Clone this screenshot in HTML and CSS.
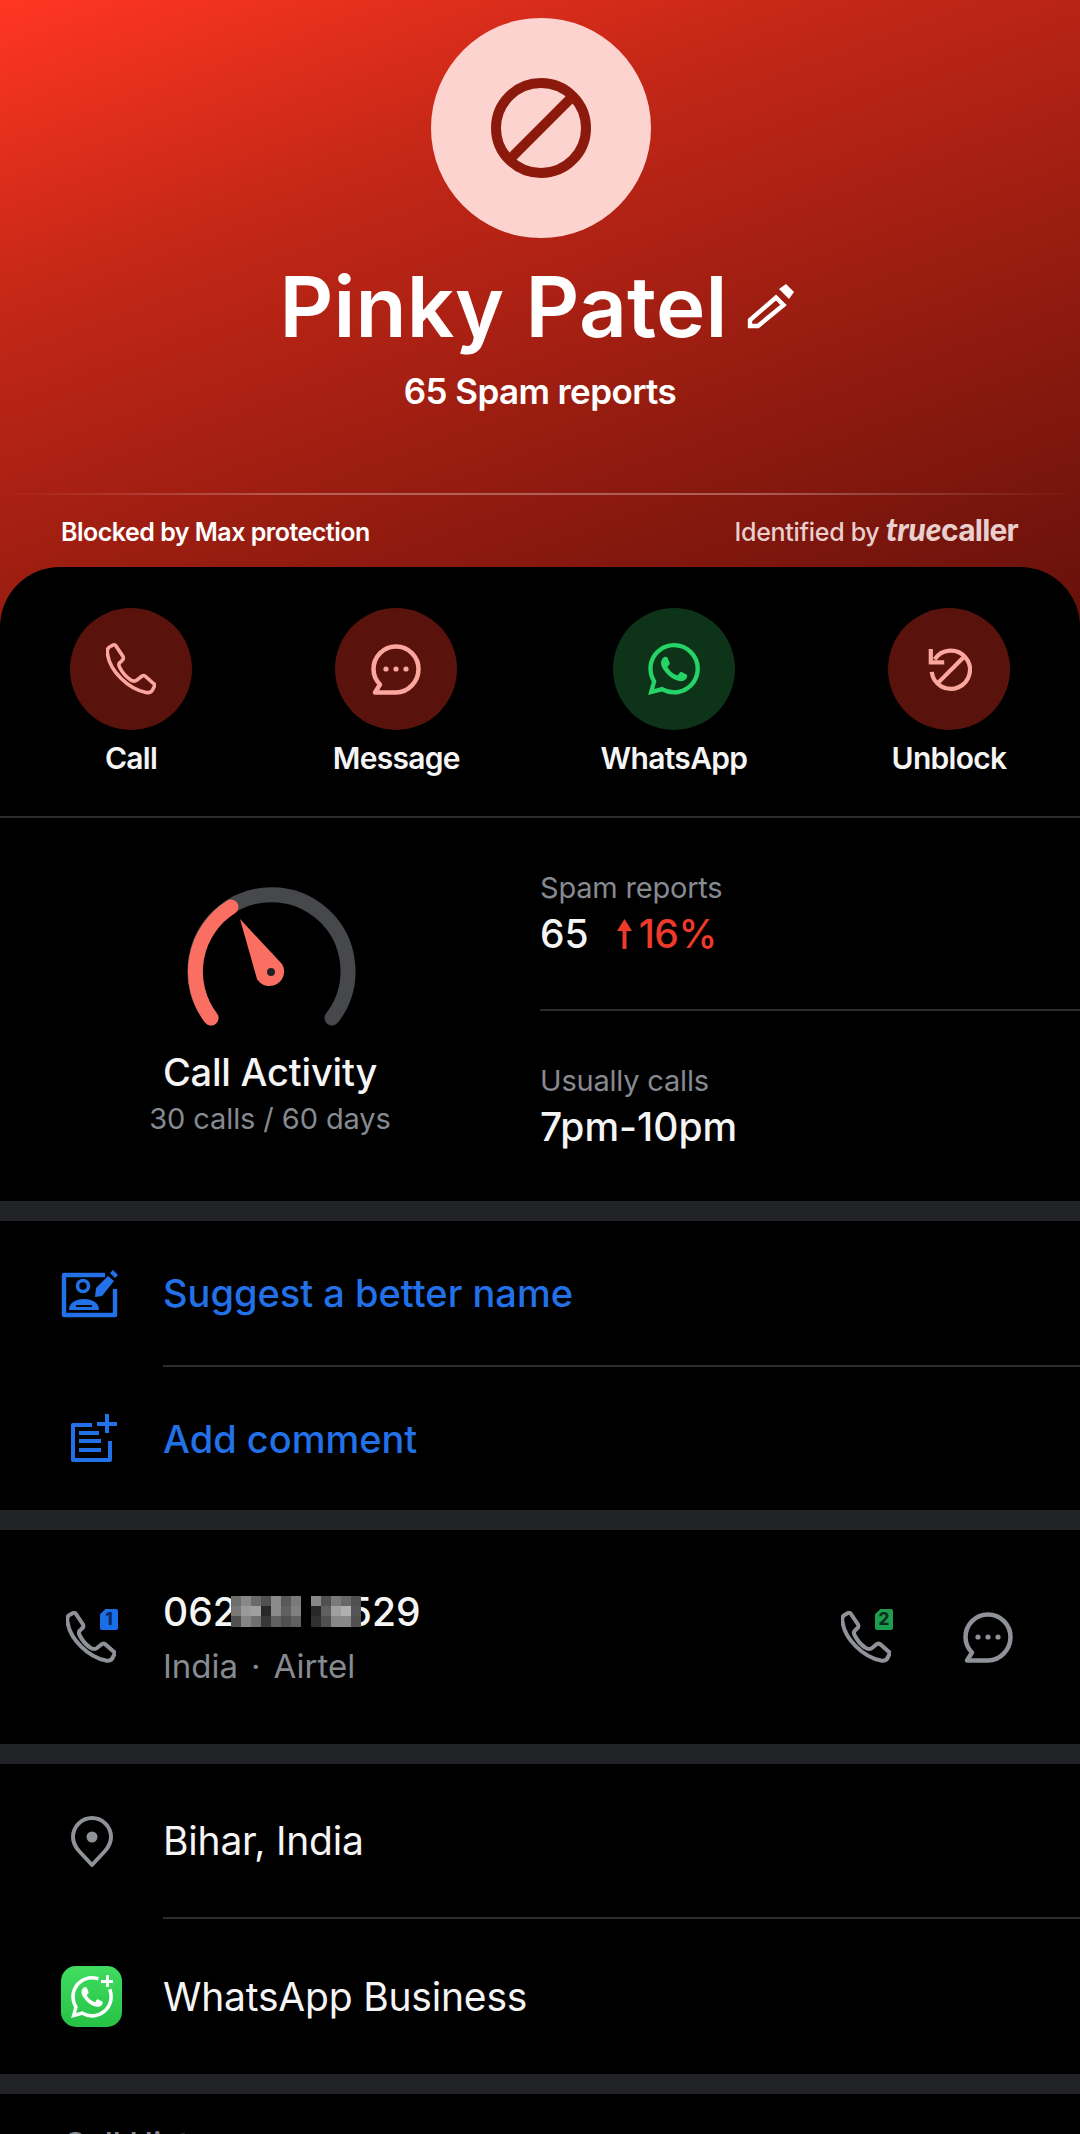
FILE: index.html
```html
<!DOCTYPE html>
<html lang="en">
<head>
    <meta charset="UTF-8">
    <meta name="viewport" content="width=device-width, initial-scale=1.0">
    <title>Pinky Patel</title>
    <link rel="stylesheet" href="styles.css">
</head>
<body>
    <svg class="defs" width="0" height="0">
        <defs>
            <path id="phone" d="M7 2 L3.5 4 C1.5 5 1 8 1.5 11 C4 28 22 46 40 49.5 C43 50 45.5 49 46.5 47 L48.5 43 C49 42 48.5 41 47.5 40.5 L39 33 C38 32.5 37 32.5 36 33 L31 37 C29 38.5 26 38 24 36.5 C19 33 16 29 13.5 24 C12.5 22 13 20 14.5 19 L17 16.5 C17.5 15.5 17.5 14.5 17 13.5 L10 3 C9.5 2 8 1.5 7 2 Z"/>
            <path id="whatsapp" d="M17.472 14.382c-.297-.149-1.758-.867-2.03-.967-.273-.099-.471-.148-.67.15-.197.297-.767.966-.94 1.164-.173.199-.347.223-.644.075-.297-.15-1.255-.463-2.39-1.475-.883-.788-1.48-1.761-1.653-2.059-.173-.297-.018-.458.13-.606.134-.133.298-.347.446-.52.149-.174.198-.298.298-.497.099-.198.05-.371-.025-.52-.075-.149-.669-1.612-.916-2.207-.242-.579-.487-.5-.669-.51-.173-.008-.371-.01-.57-.01-.198 0-.52.074-.792.372-.272.297-1.04 1.016-1.04 2.479 0 1.462 1.065 2.875 1.213 3.074.149.198 2.096 3.2 5.077 4.487.709.306 1.262.489 1.694.625.712.227 1.36.195 1.871.118.571-.085 1.758-.719 2.006-1.413.248-.694.248-1.289.173-1.413-.074-.124-.272-.198-.57-.347m-5.421 7.403h-.004a9.87 9.87 0 01-5.031-1.378l-.361-.214-3.741.982.998-3.648-.235-.374a9.86 9.86 0 01-1.51-5.26c.001-5.45 4.436-9.884 9.888-9.884 2.64 0 5.122 1.03 6.988 2.898a9.825 9.825 0 012.893 6.994c-.003 5.45-4.437 9.884-9.885 9.884m8.413-18.297A11.815 11.815 0 0012.05 0C5.495 0 .16 5.335.157 11.892c0 2.096.547 4.142 1.588 5.945L.057 24l6.305-1.654a11.882 11.882 0 005.683 1.448h.005c6.554 0 11.89-5.335 11.893-11.893a11.821 11.821 0 00-3.48-8.413Z"/>
            <g id="bubble">
                <path d="M25 2.5 C37.4 2.5 47.5 12.6 47.5 25 C47.5 37.4 37.4 48.5 25 48.5 H4 L9 40.5 C5 36.5 2.5 31 2.5 25 C2.5 12.6 12.6 2.5 25 2.5 Z" fill="none" stroke="currentColor" stroke-width="4.5" stroke-linejoin="round"/>
                <circle cx="15" cy="25" r="2.6" fill="currentColor"/>
                <circle cx="25" cy="25" r="2.6" fill="currentColor"/>
                <circle cx="35" cy="25" r="2.6" fill="currentColor"/>
            </g>
        </defs>
    </svg>

    <header class="hero">
        <div class="avatar">
            <svg width="100" height="100" viewBox="0 0 100 100" fill="none" stroke="#8b1a0c" stroke-width="10">
                <circle cx="50" cy="50" r="45"/>
                <path d="M18 82 L82 18"/>
            </svg>
        </div>
        <div class="name-row">
            <h1 class="name">Pinky Patel</h1>
            <svg class="pencil" width="48" height="46" viewBox="0 0 48 46" fill="none" stroke="#fff" stroke-width="4.4">
                <path d="M3 42 V36 L29 13.500 L36.500 21 L11 42 Z"/>
                <path d="M32 5 L39 0 L47 8 L42 15 Z" fill="#fff" stroke="none"/>
            </svg>
        </div>
        <p class="spam-count">65 Spam reports</p>
        <div class="hero-line"></div>
        <div class="hero-foot">
            <span class="blocked">Blocked by Max protection</span>
            <span class="identified">Identified by <b class="brand-true">true</b><b class="brand-caller">caller</b></span>
        </div>
    </header>

    <main class="sheet">
        <section class="actions">
            <div class="action">
                <div class="action-circle red">
                    <svg width="50" height="52" viewBox="0 0 50 52" fill="none" stroke="#fba69e" stroke-width="3.6"><use href="#phone"/></svg>
                </div>
                <span>Call</span>
            </div>
            <div class="action">
                <div class="action-circle red">
                    <svg class="tint-pink" width="50" height="51" viewBox="0 0 50 51"><use href="#bubble"/></svg>
                </div>
                <span>Message</span>
            </div>
            <div class="action">
                <div class="action-circle green">
                    <svg width="52" height="52" viewBox="0 0 24 24" fill="#25d366"><use href="#whatsapp"/></svg>
                </div>
                <span>WhatsApp</span>
            </div>
            <div class="action">
                <div class="action-circle red">
                    <svg width="46" height="46" viewBox="0 0 48 48" fill="none" stroke="#fba69e" stroke-width="4.4">
                        <path d="M9 14 A20 20 0 1 1 6 27"/>
                        <path d="M5 3 V17 H19"/>
                        <path d="M12 39 L39 12"/>
                    </svg>
                </div>
                <span>Unblock</span>
            </div>
        </section>

        <section class="stats">
            <div class="gauge">
                <svg width="180" height="160" viewBox="0 0 180 160" fill="none" stroke-width="15" stroke-linecap="round">
                    <path d="M30 134 A76.5 76.5 0 1 1 151 134" stroke="#46484b"/>
                    <path d="M30 134 A76.5 76.5 0 0 1 50 23" stroke="#fb6f63"/>
                    <path d="M59 35 L101 80 A14 14 0 1 1 76 95 Z" fill="#fb6f63" stroke="none"/>
                    <circle cx="90" cy="88" r="4" fill="#222" stroke="none"/>
                </svg>
                <div class="gauge-title">Call Activity</div>
                <div class="gauge-sub">30 calls / 60 days</div>
            </div>
            <div class="stat-list">
                <div class="stat">
                    <div class="stat-label">Spam reports</div>
                    <div class="stat-value">65
                        <span class="trend">
                            <svg width="15" height="30" viewBox="0 0 15 30" fill="#ef3a2a"><path d="M7.500 0 L15 12 H9.500 V30 H5.500 V12 H0 Z"/></svg>
                            16%
                        </span>
                    </div>
                </div>
                <div class="stat stat-second">
                    <div class="stat-label">Usually calls</div>
                    <div class="stat-value">7pm-10pm</div>
                </div>
            </div>
        </section>

        <section class="group">
            <div class="row row-link">
                <div class="row-icon">
                    <svg width="60" height="48" viewBox="0 0 60 48" fill="none" stroke="#2271e8" stroke-width="4.4">
                        <path d="M44 5 H3 V45 H54 V19" stroke-linejoin="round"/>
                        <circle cx="22" cy="16" r="5.500" stroke-width="3.600"/>
                        <path d="M8 40 C8 33 14 29 23 29 C32 29 38 33 38 40 Z" fill="#2271e8" stroke="none"/>
                        <path d="M15 36 H31" stroke="#000" stroke-width="2"/>
                        <path d="M34 27 L35 18 L47 6 L53 11 L41 26 Z" fill="#2271e8" stroke="none"/>
                        <path d="M49 3 L52 0 L57 5 L54 8 Z" fill="#2271e8" stroke="none"/>
                    </svg>
                </div>
                <span>Suggest a better name</span>
            </div>
            <div class="row row-link">
                <div class="row-icon">
                    <svg width="50" height="50" viewBox="0 0 50 50" fill="none" stroke="#2271e8" stroke-width="4">
                        <path d="M24 12 H5 V47 H42 V28" stroke-linejoin="round"/>
                        <path d="M11 20 H31 M11 28 H33 M11 37 H33"/>
                        <path d="M39 1 V20 M29 11 H49"/>
                    </svg>
                </div>
                <span>Add comment</span>
            </div>
        </section>

        <section class="group">
            <div class="row row-number">
                <div class="row-icon">
                    <div class="sim-phone">
                        <svg width="50" height="52" viewBox="0 0 50 52" fill="none" stroke="#8f9298" stroke-width="4"><use href="#phone"/></svg>
                        <span class="sim sim-blue">1</span>
                    </div>
                </div>
                <div class="number-text">
                    <div class="number">
                        <span>062</span>
                        <svg class="mosaic" width="130" height="31" viewBox="0 0 130 31" shape-rendering="crispEdges">
                            <rect x="0" y="0" width="10" height="10" fill="#6e6e6e"/><rect x="10" y="0" width="10" height="10" fill="#888"/><rect x="20" y="0" width="10" height="10" fill="#6a6a6a"/><rect x="30" y="0" width="10" height="10" fill="#505050"/><rect x="40" y="0" width="10" height="10" fill="#8a8a8a"/><rect x="50" y="0" width="10" height="10" fill="#585858"/><rect x="60" y="0" width="10" height="10" fill="#7a7a7a"/>
                            <rect x="80" y="0" width="10" height="10" fill="#888"/><rect x="90" y="0" width="10" height="10" fill="#505050"/><rect x="100" y="0" width="10" height="10" fill="#7a7a7a"/><rect x="110" y="0" width="10" height="10" fill="#686868"/><rect x="120" y="0" width="10" height="10" fill="#505050"/>
                            <rect x="0" y="10" width="10" height="10" fill="#787878"/><rect x="10" y="10" width="10" height="10" fill="#9a9a9a"/><rect x="20" y="10" width="10" height="10" fill="#a0a0a0"/><rect x="30" y="10" width="10" height="10" fill="#282828"/><rect x="40" y="10" width="10" height="10" fill="#8a8a8a"/><rect x="50" y="10" width="10" height="10" fill="#606060"/><rect x="60" y="10" width="10" height="10" fill="#808080"/>
                            <rect x="80" y="10" width="10" height="10" fill="#282828"/><rect x="90" y="10" width="10" height="10" fill="#606060"/><rect x="100" y="10" width="10" height="10" fill="#a0a0a0"/><rect x="110" y="10" width="10" height="10" fill="#b0b0b0"/><rect x="120" y="10" width="10" height="10" fill="#555"/>
                            <rect x="0" y="20" width="10" height="11" fill="#505050"/><rect x="10" y="20" width="10" height="11" fill="#858585"/><rect x="20" y="20" width="10" height="11" fill="#707070"/><rect x="30" y="20" width="10" height="11" fill="#383838"/><rect x="40" y="20" width="10" height="11" fill="#606060"/><rect x="50" y="20" width="10" height="11" fill="#505050"/><rect x="60" y="20" width="10" height="11" fill="#606060"/>
                            <rect x="80" y="20" width="10" height="11" fill="#303030"/><rect x="90" y="20" width="10" height="11" fill="#505050"/><rect x="100" y="20" width="10" height="11" fill="#888"/><rect x="110" y="20" width="10" height="11" fill="#888"/><rect x="120" y="20" width="10" height="11" fill="#505050"/>
                        </svg>
                        <span>529</span>
                    </div>
                    <div class="number-sub">India<span class="dot">·</span>Airtel</div>
                </div>
                <div class="number-actions">
                    <div class="sim-phone">
                        <svg width="50" height="52" viewBox="0 0 50 52" fill="none" stroke="#8f9298" stroke-width="4"><use href="#phone"/></svg>
                        <span class="sim sim-green">2</span>
                    </div>
                    <svg class="tint-grey" width="50" height="51" viewBox="0 0 50 51"><use href="#bubble"/></svg>
                </div>
            </div>
        </section>

        <section class="group">
            <div class="row row-info">
                <div class="row-icon">
                    <svg width="42" height="52" viewBox="0 0 42 52" fill="none" stroke="#8f9298" stroke-width="4">
                        <path d="M21 49 L8 35 C4.500 31 2 27 2 21 C2 10.500 10.500 2 21 2 C31.500 2 40 10.500 40 21 C40 27 37.500 31 34 35 Z" stroke-linejoin="round"/>
                        <circle cx="21" cy="21" r="5.500" fill="#8f9298" stroke="none"/>
                    </svg>
                </div>
                <span>Bihar, India</span>
            </div>
            <div class="row row-info">
                <div class="row-icon">
                    <div class="wa-tile">
                        <svg width="42" height="42" viewBox="0 0 24 24" fill="#fff"><use href="#whatsapp"/></svg>
                        <span class="wa-plus"></span>
                    </div>
                </div>
                <span>WhatsApp Business</span>
            </div>
        </section>

        <section class="history">
            <h2>Call History</h2>
        </section>
    </main>
</body>
</html>
```

FILE: styles.css
```css
html, body {
    margin: 0;
    padding: 0;
    height: 2134px;
    overflow: hidden;
    background: #000;
}

body {
    font-family: 'Inter', 'Roboto', sans-serif;
    color: #f5f5f5;
}

.defs {
    position: absolute;
}

/* red top part */
.hero {
    height: 627px;
    padding-top: 18px;
    box-sizing: border-box;
    background: linear-gradient(160deg, #ff3622 0%, #c42717 30%, #8f1a0f 68%, #65110b 100%);
    color: #fff;
    text-align: center;
}

.avatar {
    width: 220px;
    height: 220px;
    margin-left: 431px;
    border-radius: 50%;
    background: #fcd3cf;
    display: flex;
    align-items: center;
    justify-content: center;
}

.name-row {
    display: flex;
    align-items: center;
    justify-content: center;
    gap: 19px;
    margin-top: 21px;
    height: 96px;
    padding-right: 6px;
}

.name {
    margin: 0;
    font-size: 83.5px;
    line-height: 96px;
    font-weight: 600;
    letter-spacing: 0.2px;
}

.pencil {
    flex: none;
}

.spam-count {
    margin: 16px 0 0;
    font-size: 35px;
    line-height: 40px;
    font-weight: 600;
    letter-spacing: -0.6px;
}

.hero-line {
    height: 2px;
    margin-top: 82px;
    background: linear-gradient(90deg, rgba(255, 255, 255, 0), rgba(255, 255, 255, 0.3) 30%, rgba(255, 255, 255, 0.3) 70%, rgba(255, 255, 255, 0));
}

.hero-foot {
    display: flex;
    justify-content: space-between;
    align-items: baseline;
    padding: 0 62px 0 61px;
    margin-top: 14px;
    height: 36px;
    font-size: 25px;
}

.blocked {
    font-weight: 600;
    letter-spacing: -0.5px;
}

.identified {
    font-weight: 500;
    color: #e9cfcd;
    letter-spacing: -0.3px;
}

.brand-true {
    font-family: 'Lato', sans-serif;
    font-style: italic;
    font-weight: 900;
    font-size: 32px;
}

.brand-caller {
    font-weight: 700;
    font-size: 30px;
    letter-spacing: -0.8px;
}

/* black sheet */
.sheet {
    margin-top: -60px;
    position: relative;
    background: #000;
    border-radius: 60px 60px 0 0;
}

.actions {
    display: flex;
    justify-content: space-between;
    padding: 41px 70px 0;
    height: 251px;
    box-sizing: border-box;
    border-bottom: 2px solid #2a2c30;
}

.action {
    display: flex;
    flex-direction: column;
    align-items: center;
    font-size: 30px;
    line-height: 36px;
    font-weight: 600;
    letter-spacing: -0.7px;
    min-width: 122px;
}

.action span {
    margin-top: 10px;
}

.action-circle {
    width: 122px;
    height: 122px;
    border-radius: 50%;
    display: flex;
    align-items: center;
    justify-content: center;
}

.action-circle.red {
    background: #5a130c;
}

.action-circle.green {
    background: #0d3319;
}

.tint-pink {
    color: #fba69e;
}

.tint-grey {
    color: #8f9298;
}

.stats {
    display: grid;
    grid-template-columns: 540px 1fr;
    height: 383px;
    box-sizing: border-box;
}

.gauge {
    padding-top: 66px;
    text-align: center;
}

.gauge svg {
    display: block;
    margin: 0 auto;
    transform: translateX(1px);
}

.gauge-title {
    margin-top: 5px;
    font-size: 38px;
    line-height: 46px;
    font-weight: 500;
    letter-spacing: -0.2px;
}

.gauge-sub {
    margin-top: 6px;
    font-size: 29px;
    line-height: 36px;
    color: #868a91;
    letter-spacing: -0.1px;
}

.stat-list {
    padding-top: 52px;
}

.stat {
    height: 141px;
    box-sizing: border-box;
    border-bottom: 2px solid #2a2c30;
}

.stat-second {
    border-bottom: none;
    padding-top: 52px;
    height: auto;
}

.stat-label {
    font-size: 29px;
    line-height: 36px;
    color: #868a91;
    letter-spacing: -0.2px;
}

.stat-value {
    margin-top: 5px;
    font-size: 39px;
    line-height: 46px;
    font-weight: 500;
    display: flex;
    align-items: center;
    gap: 28px;
}

.trend {
    display: inline-flex;
    align-items: center;
    gap: 7px;
    color: #ef3a2a;
    letter-spacing: -0.5px;
}

.group {
    border-top: 20px solid #222327;
}

.row {
    display: flex;
    align-items: center;
    font-size: 38px;
}

.row-icon {
    width: 163px;
    padding-left: 61px;
    box-sizing: border-box;
    flex: none;
    display: flex;
    align-items: center;
}

.row-link {
    height: 145px;
    color: #2271e8;
    font-weight: 500;
}

.row-link + .row-link {
    height: 144px;
}

.row-link + .row-link .row-icon {
    padding-left: 68px;
}

.row-link > span,
.row-info > span {
    flex: 1;
    line-height: 144px;
}

.row-link + .row-link > span {
    padding-top: 2px;
}

.row-link:first-child > span,
.row-info:first-child > span {
    border-bottom: 2px solid #2a2c30;
}

.row-number {
    height: 214px;
}

.sim-phone {
    position: relative;
    width: 50px;
    height: 52px;
}

.sim-phone svg {
    display: block;
}

.sim {
    position: absolute;
    top: -2px;
    right: -2px;
    width: 18px;
    height: 21px;
    border-radius: 2px;
    clip-path: polygon(30% 0, 100% 0, 100% 100%, 0 100%, 0 25%);
    font-size: 17px;
    line-height: 21px;
    font-weight: 800;
    text-align: center;
    color: #0a2a5c;
}

.sim-blue {
    background: #1a6fe8;
}

.sim-green {
    background: #1e9c50;
    color: #07301a;
}

.row-number .row-icon {
    padding-left: 66px;
}

.number-text {
    flex: 1;
}

.number {
    display: flex;
    align-items: center;
    height: 46px;
    font-size: 39px;
    font-weight: 500;
    margin-bottom: 12px;
}

/* the blur sits over the first and last digits */
.mosaic {
    flex: none;
    position: relative;
    margin: 0 -13px 0 -6px;
    background: #000;
}

.number-sub {
    font-size: 33px;
    line-height: 40px;
    color: #868a91;
}

.dot {
    margin: 0 13px;
}

.number-actions {
    display: flex;
    align-items: center;
    gap: 72px;
    padding-right: 67px;
}

.row-info {
    height: 155px;
    font-size: 39px;
    font-weight: 400;
    letter-spacing: -0.2px;
}

.row-info > span {
    line-height: 153px;
}

.row-info:first-child .row-icon {
    padding-left: 71px;
}

.wa-tile {
    position: relative;
    width: 61px;
    height: 61px;
    border-radius: 15px;
    background: linear-gradient(180deg, #41dd61, #26c246);
    display: flex;
    align-items: center;
    justify-content: center;
}

.wa-plus {
    position: absolute;
    top: 6px;
    right: 6px;
    width: 18px;
    height: 18px;
    border-radius: 50%;
    background: #3cd65b;
    background-image: linear-gradient(#fff, #fff), linear-gradient(#fff, #fff);
    background-repeat: no-repeat;
    background-size: 12px 3px, 3px 12px;
    background-position: center;
}

.history {
    border-top: 20px solid #222327;
    padding: 31px 63px 0;
}

.history h2 {
    margin: 0;
    font-size: 32px;
    line-height: 40px;
    font-weight: 500;
    color: #868a91;
}
```
